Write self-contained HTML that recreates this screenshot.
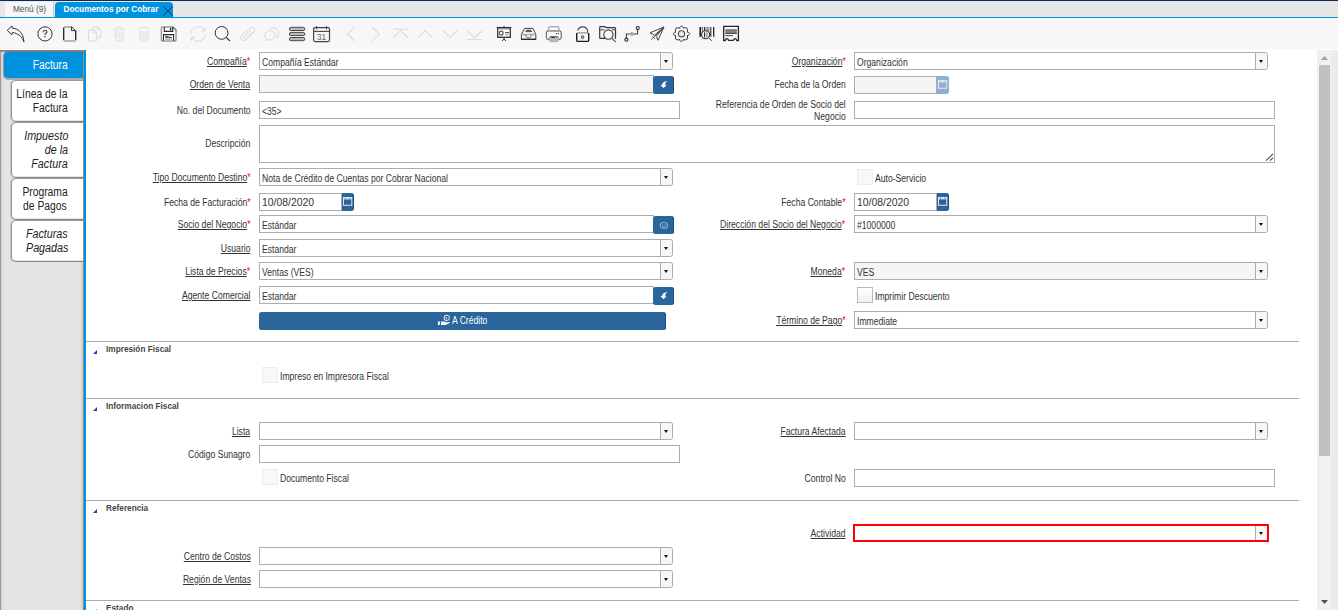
<!DOCTYPE html>
<html><head><meta charset="utf-8"><title>Documentos por Cobrar</title>
<style>
html,body{margin:0;padding:0;}
body{width:1338px;height:610px;overflow:hidden;background:#fff;position:relative;font-family:"Liberation Sans",sans-serif;font-size:10px;color:#333;}
.a{position:absolute;}
.t{position:absolute;white-space:nowrap;line-height:12px;height:12px;font-size:10px;color:#333;}
.l{transform-origin:100% 50%;text-align:right;}
.v{transform-origin:0 50%;}
.u{text-decoration:underline;}
.s{color:#f00;}
.in{position:absolute;box-sizing:border-box;height:18px;border:1px solid #adadad;background:#fff;}
.ro{background:#f5f5f5;}
.cb{position:absolute;box-sizing:border-box;height:18px;width:13px;border:1px solid #adadad;background:#f6f6f6;border-radius:0 2.5px 2.5px 0;}
.cb:after{content:"";position:absolute;left:2.7px;top:7px;border-left:2.8px solid transparent;border-right:2.8px solid transparent;border-top:3.2px solid #111;}
.bt{position:absolute;box-sizing:border-box;background:#2a659b;border-radius:2.5px;border-right:1px solid #1c4c80;}
.ck{position:absolute;box-sizing:border-box;width:16px;height:16px;border:1px solid #ececec;background:#f8f8f8;}
.ck.en{border-color:#b9b9b9;background:linear-gradient(#fff,#f1f1f1);}
.sec{position:absolute;left:86px;width:1213px;height:1px;background:#ababab;}
.tri{position:absolute;left:93px;width:0;height:0;border-left:4px solid transparent;border-bottom:4px solid #1340c8;}
.st{position:absolute;left:106px;font-size:8.25px;font-weight:bold;color:#444;line-height:10px;white-space:nowrap;}
.tab{position:absolute;box-sizing:border-box;left:11px;width:72px;background:#fff;border:1px solid #858585;border-top-color:#9a9a9a;border-left-color:#929292;border-right:none;border-radius:5px 0 0 5px;box-shadow:-1px 0 0 rgba(0,0,0,.13),inset 0 -1px 0 #e6e6e6;}
.tt{position:absolute;right:1270px;white-space:nowrap;font-size:12px;line-height:14px;color:#222;transform-origin:100% 50%;}
.i{font-style:italic;}
svg{position:absolute;overflow:visible;}
</style></head>
<body>
<div class="a" style="left:0;top:0;width:1338px;height:1px;background:#082b60"></div>
<div class="a" style="left:0;top:1px;width:1338px;height:16px;background:#e6e6e6"></div>
<div class="a" style="left:0;top:1px;width:1338px;height:1px;background:#ebe7e4"></div>
<div class="a" style="left:5px;top:2px;width:49px;height:15px;background:#f6f6f6;border-right:1px solid #c9c9c9;box-sizing:border-box"></div>
<div class="a" style="left:13px;top:5px;font-size:8.25px;line-height:10px;color:#555;white-space:nowrap">Menú (9)</div>
<div class="a" style="left:55px;top:2px;width:118px;height:16px;background:#0093dd;border-radius:4px 4px 0 0"></div>
<div class="a" style="left:63.5px;top:5px;font-size:8.25px;line-height:10px;font-weight:bold;color:#fff;white-space:nowrap">Documentos por Cobrar</div>
<svg style="left:162.5px;top:5.5px" width="10" height="10" viewBox="0 0 10 10"><path d="M0.5 0.5L9.5 9.5M9.5 0.5L0.5 9.5" stroke="#0b3a5c" stroke-width="1" fill="none"/></svg>
<div class="a" style="left:0;top:17px;width:1338px;height:1px;background:#0093dd"></div>
<div class="a" style="left:0;top:18px;width:1338px;height:31px;background:#f7f7f7"></div>
<svg style="left:0;top:18px" width="760" height="32" viewBox="0 18 760 32" fill="none" stroke-linecap="butt" stroke-linejoin="miter">
<path d="M7.2 30.3L11.9 25.9L12.3 28.2C17.5 28.5 23.6 32 23.9 42C22.6 36.8 18 33.2 12.3 32.5L11.9 34.8Z" stroke="#333" stroke-width="1" stroke-linejoin="round"/>
<circle cx="45" cy="33.9" r="7.1" stroke="#333" stroke-width="1"/>
<path d="M43.2 32.2C43.2 30.6 44 30.2 45 30.2C46.2 30.2 46.9 30.9 46.9 31.8C46.9 33.2 45 33.2 45 35" stroke="#333" stroke-width="1.1"/><rect x="44.4" y="36" width="1.2" height="1.3" fill="#333"/>
<path d="M63.7 27.5V40.3M75.7 30.6V40.3" stroke="#222" stroke-width="1.3"/>
<path d="M64 27H71.6M64.3 41H75.2" stroke="#555" stroke-width="1.2" opacity=".8"/>
<path d="M71.5 26.8V30.6H75.3M71.5 26.8L75.7 30.8" stroke="#333" stroke-width="1"/>
<path d="M92.5 29.5V28Q92.5 26.8 93.7 26.8H98L100.7 29.3V36.5Q100.7 37.5 99.7 37.5H98" stroke="#d9d9d9" stroke-width="1"/>
<path d="M97.3 27V29.6H100.4" stroke="#d9d9d9" stroke-width="1"/>
<path d="M88.6 31Q88.6 30 89.6 30H94L96.8 32.6V40Q96.8 41 95.8 41H89.6Q88.6 41 88.6 40Z" stroke="#d9d9d9" stroke-width="1"/>
<path d="M93.8 30.3V32.8H96.5" stroke="#d9d9d9" stroke-width="1"/>
<path d="M113.5 29H124.7M117 28.8Q117 26.7 119.1 26.7Q121.2 26.7 121.2 28.8" stroke="#dedede" stroke-width="1"/>
<path d="M114.6 29.2L115.6 40Q115.7 41 116.7 41H121.5Q122.5 41 122.6 40L123.6 29.2" stroke="#dedede" stroke-width="1"/>
<path d="M117 31V39M119.1 31V39M121.2 31V39" stroke="#dedede" stroke-width="1"/>
<path d="M139.4 30.5Q139.4 27 141.5 27Q143.2 27 143.8 28.5Q144.6 27 146.3 27Q148.6 27 148.6 30.5" stroke="#dedede" stroke-width="1"/>
<path d="M139.4 30.3L140.3 40Q140.4 41 141.4 41H146.6Q147.6 41 147.7 40L148.6 30.3" stroke="#dedede" stroke-width="1"/>
<path d="M141.8 31V39M143.9 31V39M146 31V39" stroke="#dedede" stroke-width="1"/>
<path d="M162.3 26.9H172.9L176 29.9V40Q176 40.9 175.1 40.9H162.3Q161.4 40.9 161.4 40V27.8Q161.4 26.9 162.3 26.9Z" stroke="#9c9c9c" stroke-width="1.5" fill="#fff"/>
<path d="M172.6 26.6L176.3 30.2" stroke="#666" stroke-width="1"/>
<path d="M164.3 27V31.4H172.7V27" stroke="#2b2b2b" stroke-width="1.1"/>
<path d="M170.6 27.8V30.4" stroke="#222" stroke-width="1.3"/>
<rect x="165.3" y="38.3" width="6.8" height="2.6" fill="#bdbdbd" stroke="none"/>
<path d="M163.5 40.8V34.6H173.6V40.8" stroke="#2b2b2b" stroke-width="1.1"/>
<path d="M165.2 37H168.6" stroke="#2b2b2b" stroke-width="1.5"/><path d="M168.6 37.4H171.8" stroke="#2b2b2b" stroke-width="1"/>
<path d="M191 33.4A7 6.4 0 0 1 204.5 31M205 34.6A7 6.4 0 0 1 191.7 37.4" stroke="#d9d9d9" stroke-width="1"/>
<path d="M204.8 27.2V31H201M191.5 41.2V37.4H195.3" stroke="#d9d9d9" stroke-width="1"/>
<circle cx="221.6" cy="32.9" r="6.4" stroke="#333" stroke-width="1"/><path d="M226.2 37.4L230 41.1" stroke="#333" stroke-width="1.3"/>
<path d="M254.5 31.5L246 39.7Q243.5 41.8 241.2 39.8Q239.3 37.7 241.3 35.4L250.8 27.7Q252.7 26.3 254.3 27.9Q255.6 29.6 254 31.2L245.6 38.2Q244.5 39 243.6 38.1Q242.9 37.2 243.8 36.3L250.5 30.6" stroke="#d9d9d9" stroke-width="1"/>
<path d="M269 29.6A5.2 4.6 0 1 1 277.6 35.6L278.3 37.3L276.3 36.6" stroke="#d9d9d9" stroke-width="1"/>
<path d="M266.8 38.9A5.2 4.6 0 1 1 268.6 39.7L265.9 40.8Z" stroke="#d9d9d9" stroke-width="1"/>
<rect x="289.4" y="27.3" width="15.4" height="3.2" rx="1.6" fill="#b9b9b9" stroke="#4a4a4a" stroke-width="1"/>
<rect x="289.4" y="32.4" width="15.4" height="3.2" rx="1.6" fill="#b9b9b9" stroke="#4a4a4a" stroke-width="1"/>
<rect x="289.4" y="37.5" width="15.4" height="3.2" rx="1.6" fill="#b9b9b9" stroke="#4a4a4a" stroke-width="1"/>
<rect x="313.6" y="27.6" width="15.9" height="14" rx="1.5" stroke="#444" stroke-width="1.2"/>
<path d="M313.6 31.4H329.5" stroke="#444" stroke-width="1.1"/><path d="M316.6 26V29.4M326.5 26V29.4" stroke="#444" stroke-width="1"/>
<text x="321.6" y="39.6" text-anchor="middle" font-family="Liberation Sans" font-size="8.25" fill="#666" stroke="none">31</text>
<path d="M354.6 27L347.3 34L354.6 41" stroke="#dcdcdc" stroke-width="1.1"/>
<path d="M372 27L379.3 34L372 41" stroke="#dcdcdc" stroke-width="1.1"/>
<path d="M393 29.3H408.2M393.2 37.5L400.6 30.5L408 37.5" stroke="#dcdcdc" stroke-width="1.1"/>
<path d="M418.2 37.5L425.1 30.5L432 37.5" stroke="#dcdcdc" stroke-width="1.1"/>
<path d="M443.2 30.5L450.1 37.5L457 30.5" stroke="#dcdcdc" stroke-width="1.1"/>
<path d="M467.2 31L474.6 38L482 31M467 39.5H482.2" stroke="#dcdcdc" stroke-width="1.1"/>
<path d="M496.6 27.5H511.4" stroke="#333" stroke-width="1.1"/><path d="M503.2 26.8H504.8" stroke="#333" stroke-width=".9"/>
<rect x="497.7" y="28.1" width="12.6" height="9.2" stroke="#333" stroke-width="1.3" fill="#fff"/>
<path d="M498.4 29H509.6" stroke="#b0b0b0" stroke-width="1.1"/>
<rect x="499.5" y="31.2" width="3.5" height="4" rx="1.4" stroke="#555" stroke-width="1.2" fill="#fff"/>
<path d="M505.2 32.6H509" stroke="#444" stroke-width="1.1"/><path d="M505.2 34.6H508.6" stroke="#aaa" stroke-width="1.3"/>
<path d="M504 37.8V38.9M502.2 41L504 38.9L505.8 41" stroke="#333" stroke-width="1"/>
<path d="M522.4 34.6H534.8" stroke="#ababab" stroke-width="1.7"/>
<path d="M524.6 28.4H532.9L535.8 34.4V39.3H521.4V34.4Z" stroke="#444" stroke-width="1" stroke-linejoin="round"/>
<path d="M521 39.3H536.2" stroke="#2a2a2a" stroke-width="1.3"/>
<path d="M525.6 31.6L526.6 30.2H530.8L531.8 31.6Z" fill="#444" stroke="#444" stroke-width=".8"/>
<path d="M525.7 35.2C525.7 38.4 531.3 38.4 531.3 35.2" stroke="#555" stroke-width="1" fill="#f7f7f7"/>
<rect x="548.6" y="26.8" width="10.2" height="4" rx="1" stroke="#b0b0b0" stroke-width="1.5" fill="#fff"/>
<rect x="546.4" y="30.9" width="14.8" height="8.5" rx="1.8" stroke="#666" stroke-width="1.1" fill="#fbfbfb"/><path d="M547.6 30.9H560" stroke="#a8a8a8" stroke-width="1.3"/>
<rect x="549.3" y="36.6" width="9" height="5" rx="1" fill="#bbb" stroke="#aaa" stroke-width="1"/>
<path d="M549.6 36.8H558" stroke="#666" stroke-width="1"/><path d="M551.4 37.4H554.8" stroke="#333" stroke-width="1.2"/>
<rect x="555.9" y="33" width="1.1" height="1.1" fill="#444" stroke="none"/><rect x="557.9" y="33" width="1.1" height="1.1" fill="#444" stroke="none"/>
<path d="M577 32.9H588.4" stroke="#9a9a9a" stroke-width="1.4"/>
<path d="M576.7 33V40.2Q576.7 41.4 577.9 41.4H587.5Q588.7 41.4 588.7 40.2V33" stroke="#1e1e1e" stroke-width="1.4"/>
<path d="M577.8 30.6A5 4.9 0 0 1 587.6 30.9V32.6" stroke="#4a4a4a" stroke-width="1.15"/>
<ellipse cx="582.6" cy="37.1" rx="1.2" ry="1.5" fill="#bbb" stroke="#444" stroke-width=".9"/>
<path d="M606 38.3H600.6Q599.7 38.3 599.7 37.4V27.4Q599.7 26.6 600.6 26.6H605L606.3 27.7H614.6Q615.5 27.7 615.5 28.6V37.4Q615.5 38.3 614.8 38.3" stroke="#333" stroke-width="1.2"/>
<path d="M600 29.8H604.6M612 29.8H615.3" stroke="#777" stroke-width="1.4"/>
<circle cx="608.4" cy="34.6" r="4.7" stroke="#444" stroke-width="1.1" fill="#f7f7f7"/><path d="M611.9 38.4L615.7 41.8" stroke="#444" stroke-width="1.1"/>
<path d="M626.4 38V34H630.4M633.6 34H637.6V29.8" stroke="#444" stroke-width="1.1"/>
<circle cx="626.4" cy="39.7" r="1.55" stroke="#2a2a2a" stroke-width="1.1" fill="#f7f7f7"/><circle cx="632" cy="34" r="1.4" stroke="#888" stroke-width="1" fill="#ddd"/><circle cx="637.7" cy="28.1" r="1.55" stroke="#2a2a2a" stroke-width="1.1" fill="#f7f7f7"/>
<path d="M664 27L650 32.8L654.4 35.2ZM664 27L658 40.3L656.3 36.4Z" stroke="#333" stroke-width=".9" stroke-linejoin="round"/><path d="M663.6 27.4L651.3 39.8M652.4 36.2L655 38.8" stroke="#444" stroke-width=".85"/>
<path d="M677.2 27.8L679.3 27.8L679.6 28.3C680 25.5 683 25.5 683.4 28.3L683.7 27.8L685.8 27.8Q687.5 27.8 687.5 29.5L687.5 31.6L687 31.9C690.4 32.3 690.4 35.3 687 35.7L687.5 36L687.5 38.1Q687.5 39.8 685.8 39.8L683.7 39.8L683.4 39.3C683 42.1 680 42.1 679.6 39.3L679.3 39.8L677.2 39.8Q675.5 39.8 675.5 38.1L675.5 36L676 35.7C672.6 35.3 672.6 32.3 676 31.9L675.5 31.6L675.5 29.5Q675.5 27.8 677.2 27.8Z" stroke="#3a3a3a" stroke-width="1" stroke-linejoin="round"/><circle cx="681.5" cy="33.8" r="3.1" stroke="#444" stroke-width="1.05"/><circle cx="681.5" cy="33.8" r="1.9" stroke="#d0d0d0" stroke-width=".7"/>
<path d="M700.2 27V36.7" stroke="#222" stroke-width="1.6"/>
<path d="M702.3 27V36.7" stroke="#444" stroke-width="0.9"/>
<path d="M704.6 27V36.7" stroke="#333" stroke-width="1.4"/>
<path d="M707.6 27V36.7" stroke="#999" stroke-width="2.8"/>
<path d="M710.6 27V36.7" stroke="#555" stroke-width="1.6"/>
<path d="M713.7 27V36.7" stroke="#222" stroke-width="1.3"/>
<circle cx="705.6" cy="34.8" r="4" stroke="#333" stroke-width="1.1" fill="#f7f7f7"/><path d="M704.6 32.2V37.4" stroke="#333" stroke-width="1.2"/><path d="M706.8 32.4V37.2" stroke="#999" stroke-width="1.4"/><path d="M708.6 37.8L711.8 40.8" stroke="#444" stroke-width="1"/>
<path d="M723.7 40.6V26.4H738.4V40.6L737 40.6Q736 38.6 735 38.6Q734 38.6 733.4 40.4H728.6Q728 38.6 727 38.6Q726 38.6 725.2 40.6Z" stroke="#222" stroke-width="1.3" stroke-linejoin="round"/>
<rect x="725.4" y="29" width="11.4" height="4.6" fill="#8c8c8c" stroke="none"/><path d="M725.4 30.8H736.8" stroke="#666" stroke-width=".8"/><path d="M725.4 33.3H736.8" stroke="#333" stroke-width="1"/><path d="M725.4 35.6H733" stroke="#555" stroke-width="1.1"/>
</svg>
<div class="a" style="left:0;top:50px;width:84px;height:560px;background:linear-gradient(to right,#9a9a9a 0,#9a9a9a 1px,#cfcfcf 1px,#e0e0e0 3px,#e4e4e4 5px,#e4e4e4 80px,#d4d4d4 82px,#c4c4c4 83px)"></div>
<div class="a" style="left:83px;top:50px;width:1px;height:560px;background:#8c8c8c"></div>
<div class="a" style="left:0;top:50px;width:84px;height:2px;background:linear-gradient(#7f7f7f,#9c928d)"></div>
<div class="a" style="left:84px;top:50px;width:2px;height:560px;background:#0093dd"></div>
<div class="tab" style="left:3px;width:80px;top:51px;height:28px;background:#0093dd;border-color:#7d7d7d #000 #b3aaa5 #a39893;box-shadow:0 1px 0 #adadad"></div>
<div class="tt"  style="top:58px;color:#fff;transform:scaleX(0.86)">Factura</div>
<div class="tab" style="top:80px;height:42px"></div>
<div class="tt" style="top:87px;right:1270.8px;transform:scaleX(0.86)">Línea de la</div>
<div class="tt" style="top:101px;right:1270.8px;transform:scaleX(0.86)">Factura</div>
<div class="tab" style="top:122px;height:56px"></div>
<div class="tt i" style="top:129px;right:1270px;transform:scaleX(0.895)">Impuesto</div>
<div class="tt i" style="top:143px;right:1270px;transform:scaleX(0.895)">de la</div>
<div class="tt i" style="top:157px;right:1270px;transform:scaleX(0.895)">Factura</div>
<div class="tab" style="top:178px;height:42px"></div>
<div class="tt" style="top:185px;right:1270.8px;transform:scaleX(0.86)">Programa</div>
<div class="tt" style="top:199px;right:1270.8px;transform:scaleX(0.86)">de Pagos</div>
<div class="tab" style="top:220px;height:42px"></div>
<div class="tt i" style="top:227px;right:1270px;transform:scaleX(0.895)">Facturas</div>
<div class="tt i" style="top:241px;right:1270px;transform:scaleX(0.895)">Pagadas</div>
<div class="a" style="left:1317px;top:50px;width:14px;height:560px;background:#f1f1f1"></div>
<div class="a" style="left:1331px;top:50px;width:7px;height:560px;background:#ebebeb"></div>
<div class="a" style="left:1319px;top:65px;width:11px;height:391px;background:#c1c1c1"></div>
<svg style="left:1321px;top:56px" width="7" height="4"><path d="M0 4L3.5 0L7 4Z" fill="#a3a3a3"/></svg>
<svg style="left:1321px;top:600px" width="7" height="4"><path d="M0 0L3.5 4L7 0Z" fill="#505050"/></svg>
<div class="t l" style="right:1087.5px;top:56px;transform:scaleX(0.862)"><span class="u">Compañía</span><span class="s">*</span></div>
<div class="in" style="left:259px;top:52px;width:402px;height:18px;border-right:none;"></div>
<div class="cb" style="left:660px;top:52px"></div>
<div class="t v" style="left:262px;top:56.7px;font-size:10px;transform:scaleX(0.86)">Compañía Estándar</div>
<div class="t l" style="right:492.5px;top:56px;transform:scaleX(0.862)"><span class="u">Organización</span><span class="s">*</span></div>
<div class="in" style="left:854px;top:52px;width:402px;height:18px;border-right:none;"></div>
<div class="cb" style="left:1255px;top:52px"></div>
<div class="t v" style="left:857px;top:56.7px;font-size:10px;transform:scaleX(0.86)">Organización</div>
<div class="t l" style="right:1087.5px;top:79px;transform:scaleX(0.862)"><span class="u">Orden de Venta</span></div>
<div class="in ro" style="left:259px;top:75px;width:395px;height:18px;"></div>
<div class="bt" style="left:653px;top:76px;width:21px;height:18px"></div>
<svg style="left:659px;top:81px" width="9" height="9" viewBox="0 0 9 9"><path d="M8.5 0C5 0.2 3.2 2 3 4L1.5 4.2L4.4 7L7.6 4.4L6.3 4.2C6 2.8 6.5 1.3 8.5 0Z" fill="#fff"/></svg>
<div class="t l" style="right:492.5px;top:79px;transform:scaleX(0.862)">Fecha de la Orden</div>
<div class="in ro" style="left:854px;top:76px;width:83px;height:18px;"></div>
<div class="bt" style="left:937px;top:76px;width:12px;height:18px;background:#8fafd0;border-right-color:#8fafd0;border-radius:0 3px 3px 0"></div>
<svg style="left:937.6px;top:80.4px" width="10" height="10" viewBox="0 0 10 10"><rect x="0.5" y="0.5" width="8.3" height="7.8" fill="none" stroke="#dfe8f2" stroke-width="1"/><path d="M0.5 1.6H8.8" stroke="#dfe8f2" stroke-width="1.6"/><path d="M2.4 0.8v1.2M6.9 0.8v1.2" stroke="#8fafd0" stroke-width=".9"/></svg>
<div class="t l" style="right:1087.5px;top:104.5px;transform:scaleX(0.862)">No. del Documento</div>
<div class="in" style="left:259px;top:101px;width:421px;height:18px;"></div>
<div class="t v" style="left:262px;top:105.7px;font-size:10px;transform:scaleX(0.86)">&lt;35&gt;</div>
<div class="t l" style="right:492.5px;top:99px;transform:scaleX(0.862)">Referencia de Orden de Socio del</div>
<div class="t l" style="right:492.5px;top:110.5px;transform:scaleX(0.862)">Negocio</div>
<div class="in" style="left:854px;top:101px;width:421px;height:18px;"></div>
<div class="t l" style="right:1087.5px;top:138px;transform:scaleX(0.862)">Descripción</div>
<div class="in" style="left:259px;top:125px;width:1016px;height:38px;"></div>
<svg style="left:1266px;top:153px" width="8" height="8" viewBox="0 0 8 8"><path d="M7.1 0.9L0 7.6M7.1 4.9L3.9 7.6" stroke="#4a4a4a" stroke-width="1.1" fill="none"/></svg>
<div class="t l" style="right:1087.5px;top:172px;transform:scaleX(0.862)"><span class="u">Tipo Documento Destino</span><span class="s">*</span></div>
<div class="in" style="left:259px;top:168px;width:402px;height:18px;border-right:none;"></div>
<div class="cb" style="left:660px;top:168px"></div>
<div class="t v" style="left:262px;top:172.7px;font-size:10px;transform:scaleX(0.86)">Nota de Crédito de Cuentas por Cobrar Nacional</div>
<div class="ck" style="left:857px;top:169px"></div>
<div class="t v" style="left:875.2px;top:172.5px;font-size:10px;transform:scaleX(0.86)">Auto-Servicio</div>
<div class="t l" style="right:1087.5px;top:196.5px;transform:scaleX(0.862)">Fecha de Facturación<span class="s">*</span></div>
<div class="in" style="left:259px;top:193px;width:83px;height:18px;"></div>
<div class="bt" style="left:342px;top:193px;width:12px;height:18px;background:#2a659b;border-right-color:#1c4c80;border-radius:0 3px 3px 0"></div>
<svg style="left:342.6px;top:197.4px" width="10" height="10" viewBox="0 0 10 10"><rect x="0.5" y="0.5" width="8.3" height="7.8" fill="none" stroke="#dfe8f2" stroke-width="1"/><path d="M0.5 1.6H8.8" stroke="#dfe8f2" stroke-width="1.6"/><path d="M2.4 0.8v1.2M6.9 0.8v1.2" stroke="#2a659b" stroke-width=".9"/></svg>
<div class="t v" style="left:261.6px;top:196.2px;font-size:11.5px;transform:scaleX(0.905)">10/08/2020</div>
<div class="t l" style="right:492.5px;top:196.5px;transform:scaleX(0.862)">Fecha Contable<span class="s">*</span></div>
<div class="in" style="left:854px;top:193px;width:83px;height:18px;"></div>
<div class="bt" style="left:937px;top:193px;width:12px;height:18px;background:#2a659b;border-right-color:#1c4c80;border-radius:0 3px 3px 0"></div>
<svg style="left:937.6px;top:197.4px" width="10" height="10" viewBox="0 0 10 10"><rect x="0.5" y="0.5" width="8.3" height="7.8" fill="none" stroke="#dfe8f2" stroke-width="1"/><path d="M0.5 1.6H8.8" stroke="#dfe8f2" stroke-width="1.6"/><path d="M2.4 0.8v1.2M6.9 0.8v1.2" stroke="#2a659b" stroke-width=".9"/></svg>
<div class="t v" style="left:856.6px;top:196.2px;font-size:11.5px;transform:scaleX(0.905)">10/08/2020</div>
<div class="t l" style="right:1087.5px;top:219px;transform:scaleX(0.862)"><span class="u">Socio del Negocio</span><span class="s">*</span></div>
<div class="in" style="left:259px;top:215px;width:395px;height:18px;"></div>
<div class="t v" style="left:262px;top:219.7px;font-size:10px;transform:scaleX(0.86)">Estándar</div>
<div class="bt" style="left:653px;top:216px;width:21px;height:18px"></div>
<svg style="left:659px;top:221px" width="9" height="9" viewBox="0 0 9 9"><ellipse cx="4.9" cy="4.5" rx="3.6" ry="3" fill="none" stroke="#8fb3d6" stroke-width="1.1"/><path d="M3.6 3.4V5Q3.6 5.8 4.9 5.8Q6.2 5.8 6.2 5V3.4" fill="none" stroke="#8fb3d6" stroke-width=".9"/></svg>
<div class="t l" style="right:492.5px;top:219px;transform:scaleX(0.862)"><span class="u">Dirección del Socio del Negocio</span><span class="s">*</span></div>
<div class="in" style="left:854px;top:215px;width:402px;height:18px;border-right:none;"></div>
<div class="cb" style="left:1255px;top:215px"></div>
<div class="t v" style="left:857px;top:219.7px;font-size:10px;transform:scaleX(0.86)">#1000000</div>
<div class="t l" style="right:1087.5px;top:243px;transform:scaleX(0.862)"><span class="u">Usuario</span></div>
<div class="in" style="left:259px;top:239px;width:402px;height:18px;border-right:none;"></div>
<div class="cb" style="left:660px;top:239px"></div>
<div class="t v" style="left:262px;top:243.7px;font-size:10px;transform:scaleX(0.86)">Estandar</div>
<div class="t l" style="right:1087.5px;top:266px;transform:scaleX(0.862)"><span class="u">Lista de Precios</span><span class="s">*</span></div>
<div class="in" style="left:259px;top:262px;width:402px;height:18px;border-right:none;"></div>
<div class="cb" style="left:660px;top:262px"></div>
<div class="t v" style="left:262px;top:266.7px;font-size:10px;transform:scaleX(0.86)">Ventas (VES)</div>
<div class="t l" style="right:492.5px;top:266px;transform:scaleX(0.862)"><span class="u">Moneda</span><span class="s">*</span></div>
<div class="in ro" style="left:854px;top:262px;width:402px;height:18px;border-right:none;"></div>
<div class="cb" style="left:1255px;top:262px"></div>
<div class="t v" style="left:857px;top:266.7px;font-size:10px;transform:scaleX(0.86)">VES</div>
<div class="t l" style="right:1087.5px;top:290px;transform:scaleX(0.862)"><span class="u">Agente Comercial</span></div>
<div class="in" style="left:259px;top:286px;width:395px;height:18px;"></div>
<div class="t v" style="left:262px;top:290.7px;font-size:10px;transform:scaleX(0.86)">Estandar</div>
<div class="bt" style="left:653px;top:287px;width:21px;height:18px"></div>
<svg style="left:659px;top:292px" width="9" height="9" viewBox="0 0 9 9"><path d="M8.5 0C5 0.2 3.2 2 3 4L1.5 4.2L4.4 7L7.6 4.4L6.3 4.2C6 2.8 6.5 1.3 8.5 0Z" fill="#fff"/></svg>
<div class="ck en" style="left:857px;top:287px"></div>
<div class="t v" style="left:875.2px;top:290.5px;font-size:10px;transform:scaleX(0.86)">Imprimir Descuento</div>
<div class="bt" style="left:259px;top:312px;width:407px;height:18px"></div>
<svg style="left:436px;top:313px" width="16" height="14" viewBox="436 313 16 14"><circle cx="446.7" cy="317.9" r="2.7" fill="none" stroke="#fff" stroke-width=".9"/><path d="M446.2 316.6V318.8H447.3" fill="none" stroke="#fff" stroke-width=".7"/><rect x="437.9" y="321.4" width="1.9" height="3.6" fill="#fff"/><path d="M441 321.6H444.6Q445.6 321.6 445.8 322.4L449.6 321.9Q450.2 322.2 449.6 322.9L445.6 324.9H441Z" fill="#fff"/></svg>
<div class="t v" style="left:452px;top:314.6px;color:#fff;transform:scaleX(0.86)">A Crédito</div>
<div class="t l" style="right:492.5px;top:315px;transform:scaleX(0.862)"><span class="u">Término de Pago</span><span class="s">*</span></div>
<div class="in" style="left:854px;top:311px;width:402px;height:18px;border-right:none;"></div>
<div class="cb" style="left:1255px;top:311px"></div>
<div class="t v" style="left:857px;top:315.7px;font-size:10px;transform:scaleX(0.86)">Immediate</div>
<div class="sec" style="top:341px"></div>
<div class="tri" style="top:350px"></div>
<div class="st" style="top:344.5px">Impresión Fiscal</div>
<div class="ck" style="left:262px;top:367px"></div>
<div class="t v" style="left:280.2px;top:370.5px;font-size:10px;transform:scaleX(0.86)">Impreso en Impresora Fiscal</div>
<div class="sec" style="top:398px"></div>
<div class="tri" style="top:407px"></div>
<div class="st" style="top:401.5px">Informacion Fiscal</div>
<div class="t l" style="right:1087.5px;top:426px;transform:scaleX(0.862)"><span class="u">Lista</span></div>
<div class="in" style="left:259px;top:422px;width:402px;height:18px;border-right:none;"></div>
<div class="cb" style="left:660px;top:422px"></div>
<div class="t l" style="right:492.5px;top:426px;transform:scaleX(0.862)"><span class="u">Factura Afectada</span></div>
<div class="in" style="left:854px;top:422px;width:402px;height:18px;border-right:none;"></div>
<div class="cb" style="left:1255px;top:422px"></div>
<div class="t l" style="right:1087.5px;top:449px;transform:scaleX(0.862)">Código Sunagro</div>
<div class="in" style="left:259px;top:445px;width:421px;height:18px;"></div>
<div class="ck" style="left:262px;top:469px"></div>
<div class="t v" style="left:280.2px;top:472.5px;font-size:10px;transform:scaleX(0.86)">Documento Fiscal</div>
<div class="t l" style="right:492.5px;top:473px;transform:scaleX(0.862)">Control No</div>
<div class="in" style="left:854px;top:469px;width:421px;height:18px;"></div>
<div class="sec" style="top:500px"></div>
<div class="tri" style="top:509px"></div>
<div class="st" style="top:503.5px">Referencia</div>
<div class="t l" style="right:492.5px;top:528px;transform:scaleX(0.862)"><span class="u">Actividad</span></div>
<div class="in" style="left:853px;top:524px;width:416px;height:18px;border:2px solid #f00"></div>
<div class="a" style="left:1255px;top:526px;width:12px;height:14px;background:#f6f6f6;border-left:1px solid #adadad;box-sizing:border-box"></div>
<div class="a" style="left:1258.7px;top:532px;width:0;height:0;border-left:2.8px solid transparent;border-right:2.8px solid transparent;border-top:3.2px solid #111"></div>
<div class="t l" style="right:1087.5px;top:551px;transform:scaleX(0.862)"><span class="u">Centro de Costos</span></div>
<div class="in" style="left:259px;top:547px;width:402px;height:18px;border-right:none;"></div>
<div class="cb" style="left:660px;top:547px"></div>
<div class="t l" style="right:1087.5px;top:574px;transform:scaleX(0.862)"><span class="u">Región de Ventas</span></div>
<div class="in" style="left:259px;top:570px;width:402px;height:18px;border-right:none;"></div>
<div class="cb" style="left:660px;top:570px"></div>
<div class="sec" style="top:600px"></div>
<div class="tri" style="top:609px"></div>
<div class="st" style="top:603.5px">Estado</div>
</body></html>
